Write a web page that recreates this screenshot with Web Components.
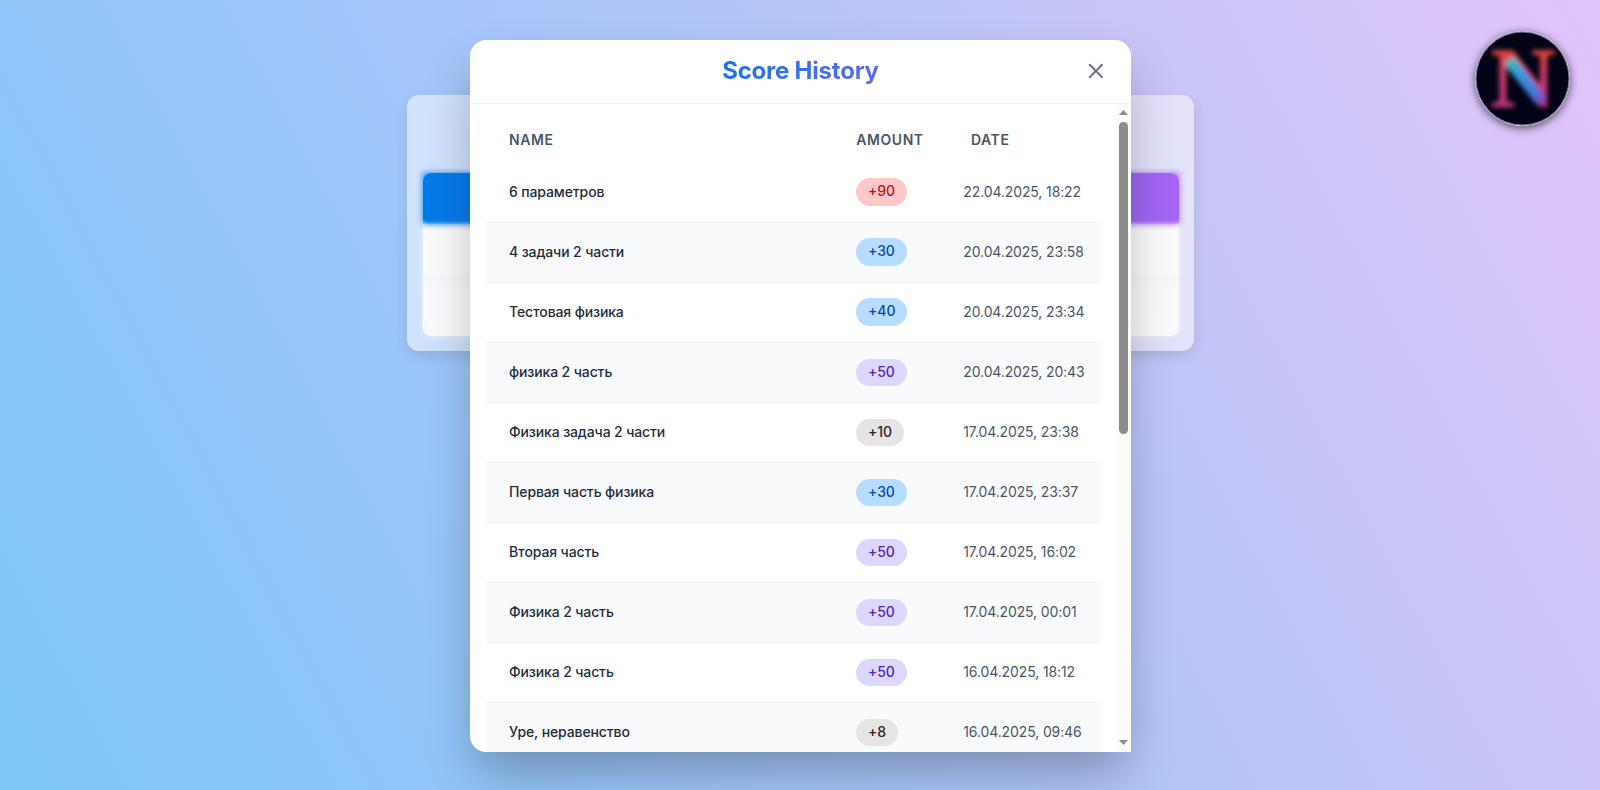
<!DOCTYPE html>
<html lang="en">
<head>
<meta charset="utf-8">
<title>Score History</title>
<style>
html,body{margin:0;height:100%;overflow:hidden}
body{font-family:Inter,"Noto Sans",sans-serif;background:linear-gradient(62deg,#7ec8fa 0%,#91c5f8 22%,#a2c5fa 38%,#b4c5f8 57.7%,#c6c5f7 73%,#cbc5f8 79%,#d8c5f9 91%,#e0c3fa 100%)}
</style>
</head>
<body>
<score-page>
  <leader-card></leader-card>
  <brand-badge slot="badge"></brand-badge>
  <score-dialog slot="dialog" heading="Score History"></score-dialog>
</score-page>
<script>
const define = (name, html, setup) => customElements.define(name, class extends HTMLElement {
  connectedCallback() {
    if (this.shadowRoot) return;
    const t = document.createElement('template');
    t.innerHTML = html;
    this.attachShadow({mode: 'open'}).append(t.content.cloneNode(true));
    if (setup) setup(this, this.shadowRoot);
  }
});

define('amount-pill', `<style>
:host{display:inline-block;box-sizing:border-box;height:27.2px;padding:0 12.1px;border-radius:14px;font-size:14px;line-height:26px;font-weight:500;background:#e7e5e4;color:#292524}
:host([tone=red]){background:#fec8c9;color:#b3131f}
:host([tone=blue]){background:#b6ddff;color:#0747b0}
:host([tone=violet]){background:#dcd7fc;color:#5526b8}
</style><slot></slot>`);

define('score-row', `<style>
:host{display:grid;grid-template-columns:347px 107.3px 1fr;align-items:center;box-sizing:border-box;height:60.08px;padding:0 0 2px 23px;border-bottom:1px solid #f1f3f5;font-size:14px;letter-spacing:-.12px}
:host([alt]){background:#f9fafc}
.name{font-weight:500;color:#1f2d3a}
.amt{display:flex;padding-top:1.6px}
.date{color:#4a5763;white-space:nowrap}
</style><span class="name"><slot name="name"></slot></span><span class="amt"><slot name="amount"></slot></span><span class="date"><slot name="date"></slot></span>`);

define('score-scrollbar', `<style>
:host{display:flex;flex-direction:column;align-items:center;width:15px;background:#fbfbfb}
svg{display:block;flex:none}
.thumb{width:9px;height:312px;border-radius:4.5px;background:#8b8b8b}
.space{flex:1}
</style><svg width="15" height="18"><path d="M3 11L7.5 6L12 11Z" fill="#8b8b8b"/></svg><div class="thumb"></div><div class="space"></div><svg width="15" height="18"><path d="M3 6L7.5 11L12 6Z" fill="#8b8b8b"/></svg>`);

const ROWS = [
  ['6 параметров','+90','red','22.04.2025, 18:22'],
  ['4 задачи 2 части','+30','blue','20.04.2025, 23:58'],
  ['Тестовая физика','+40','blue','20.04.2025, 23:34'],
  ['физика 2 часть','+50','violet','20.04.2025, 20:43'],
  ['Физика задача 2 части','+10','grey','17.04.2025, 23:38'],
  ['Первая часть физика','+30','blue','17.04.2025, 23:37'],
  ['Вторая часть','+50','violet','17.04.2025, 16:02'],
  ['Физика 2 часть','+50','violet','17.04.2025, 00:01'],
  ['Физика 2 часть','+50','violet','16.04.2025, 18:12'],
  ['Уре, неравенство','+8','grey','16.04.2025, 09:46']
];

define('score-dialog', `<style>
:host{display:flex;flex-direction:column;width:661px;height:712px;overflow:hidden;background:#fff;border-radius:16px 16px 0 16px;box-shadow:0 25px 50px -6px rgba(0,0,0,.29)}
header{display:grid;grid-template-columns:1fr 24px;align-items:center;box-sizing:border-box;height:64px;flex:none;padding:0 23px 2px 16px;border-bottom:1px solid #f1f2f4}
h2{margin:0;text-align:center;font-size:24px;line-height:30px;font-weight:700;letter-spacing:-.22px;padding:1px 0 0 31px}
h2 span{display:inline-block;background:linear-gradient(90deg,#1a72ed,#5c6bec);-webkit-background-clip:text;background-clip:text;color:transparent}
svg{display:block}
main{display:flex;flex:1;min-height:0}
.list{flex:1;padding:16px 15px 0 16px;overflow:hidden}
.head{display:grid;grid-template-columns:347.3px 114.7px 1fr;box-sizing:border-box;height:42.6px;padding:0 0 3.6px 23px;align-items:center;font-size:14px;font-weight:600;letter-spacing:.55px;color:#4a5763}
</style>
<header><h2><span></span></h2><svg width="24" height="24" viewBox="0 0 24 24"><path d="M5.7 5.7L18.1 18.1M18.1 5.7L5.7 18.1" stroke="#66717e" stroke-width="2" stroke-linecap="round"/></svg></header>
<main><div class="list"><div class="head"><span>NAME</span><span>AMOUNT</span><span>DATE</span></div></div><score-scrollbar></score-scrollbar></main>`, (host, root) => {
  root.querySelector('h2 span').textContent = host.getAttribute('heading');
  const list = root.querySelector('.list');
  ROWS.forEach(([name, amount, tone, date], i) => {
    const row = document.createElement('score-row');
    row.toggleAttribute('alt', i % 2 === 1);
    row.innerHTML = `<span slot="name">${name}</span><amount-pill slot="amount" tone="${tone}">${amount}</amount-pill><span slot="date">${date}</span>`;
    list.append(row);
  });
});

define('leader-card', `<style>
:host{display:block;box-sizing:border-box;width:787px;height:256px;padding:78px 15px 15px 16px;border-radius:12px;background:rgba(255,255,255,.5);box-shadow:0 4px 12px rgba(0,0,0,.13),0 0 10px rgba(255,255,255,.15)}
.table{position:relative;height:163px;border-radius:8px;background:linear-gradient(#fff 0,#fbfbfc 60px,#fafbfc 98px,#f6f7f8 106px,#f9fafb 114px,#fafbfc);box-shadow:0 0 7px rgba(255,255,255,.6)}
.glow,.bar{position:absolute;left:0;right:0;top:0;height:51px;background:linear-gradient(90deg,#007bea,#a865f5)}
.glow{filter:blur(3px)}
.bar{border-radius:8px 8px 0 0;-webkit-mask:linear-gradient(#000 46px,transparent 52px);mask:linear-gradient(#000 46px,transparent 52px)}
</style><div class="table"><div class="glow"></div><div class="bar"></div></div>`);

define('brand-badge', `<style>
:host{display:block;width:95px;height:95px;border-radius:50%;box-shadow:0 2px 9px rgba(0,0,0,.6)}
svg{display:block}
text{font-family:"Liberation Serif",serif;font-weight:700;font-size:84px;stroke-width:1.5px}
</style><svg width="95" height="95" viewBox="-1 -1 95 95">
<defs><linearGradient id="r" x1="0" y1="0" x2="0" y2="1"><stop offset=".25" stop-color="#de4640"/><stop offset=".45" stop-color="#d03c68"/><stop offset=".8" stop-color="#bd3580"/></linearGradient>
<linearGradient id="d" gradientUnits="userSpaceOnUse" x1="31" y1="26" x2="68" y2="74"><stop offset="0" stop-color="#3fc0b5"/><stop offset=".35" stop-color="#2f9bdd"/><stop offset=".72" stop-color="#4378dc"/><stop offset="1" stop-color="#8a3cae"/></linearGradient>
<filter id="b" x="-20%" y="-20%" width="140%" height="140%"><feGaussianBlur stdDeviation="2.7"/></filter></defs>
<circle cx="46.5" cy="46.5" r="46.5" fill="#020316" stroke="#77758a" stroke-width="1"/>
<g filter="url(#b)"><text x="15" y="75" textLength="64" lengthAdjust="spacingAndGlyphs" fill="url(#r)" stroke="url(#r)">N</text><path d="M33 28L66 70" stroke="url(#d)" stroke-width="12"/></g></svg>`);

define('score-page', `<style>
:host{display:grid;grid-template-columns:407px 787px 1fr;width:100%;height:790px}
.card{grid-column:2;grid-row:1;padding-top:95px}
.badge{grid-column:3;grid-row:1;justify-self:end;padding:31px 30px 0 0}
.dialog{grid-column:1/4;grid-row:1;z-index:2;padding:40px 0 0 470px}
</style><div class="card"><slot></slot></div><div class="badge"><slot name="badge"></slot></div><div class="dialog"><slot name="dialog"></slot></div>`);
</script>
</body>
</html>
